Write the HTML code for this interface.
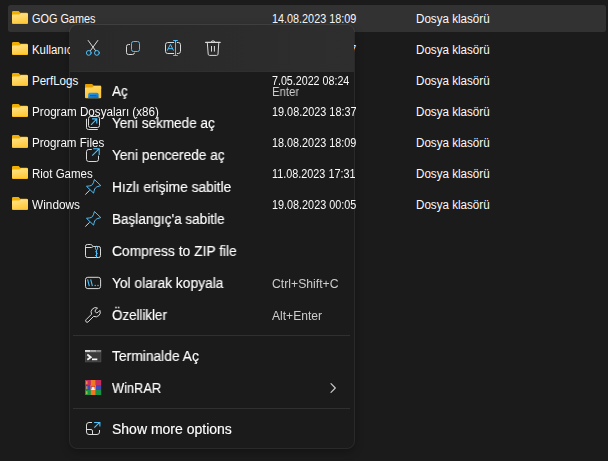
<!DOCTYPE html>
<html><head><meta charset="utf-8">
<style>
*{margin:0;padding:0;box-sizing:border-box}
html,body{width:608px;height:461px;overflow:hidden;background:#1b1b1b;font-family:"Liberation Sans",sans-serif;color:#fff}
.a{position:absolute}
.t{position:absolute;white-space:nowrap;transform-origin:0 0}
.ic{position:absolute;overflow:visible}
.hl{position:absolute;left:8px;top:5px;width:598px;height:27px;background:#323232;border-radius:2.5px}
.ln{font-size:12px;line-height:12px;color:#fafafa}
.mt{font-size:14px;line-height:14px;color:#fff;will-change:transform;-webkit-text-stroke:0.15px #fff}
.sc{font-size:12px;line-height:12px;color:#cdcdcd;will-change:transform}
.menu{position:absolute;left:69px;top:24px;width:286px;height:425px;background:transparent;border:1px solid rgba(255,255,255,0.065);background-clip:padding-box;border-radius:8px;overflow:hidden;box-shadow:0 3px 8px rgba(0,0,0,0.28)}
.tb{position:absolute;left:0;top:0;width:100%;height:47px;background:linear-gradient(90deg,#292929,#2b2b2b 50%,#2e2e2e);border-bottom:1px solid #2f2f2f}
.sep{position:absolute;left:73px;width:277px;height:1px;background:#303030}
</style></head><body>
<svg width="0" height="0" style="position:absolute"><defs>
<linearGradient id="fg" x1="0" y1="0" x2="0.3" y2="1"><stop offset="0" stop-color="#ffe590"/><stop offset="1" stop-color="#ffc93a"/></linearGradient>
<linearGradient id="fg2" x1="0" y1="0" x2="0.3" y2="1"><stop offset="0" stop-color="#ffdc70"/><stop offset="1" stop-color="#ffc22a"/></linearGradient>
<linearGradient id="bg2" x1="0" y1="0" x2="0.4" y2="1"><stop offset="0" stop-color="#2aa0f0"/><stop offset="1" stop-color="#0a74cc"/></linearGradient>
</defs></svg>
<div class="hl"></div>
<svg class="ic" width="16" height="13" viewBox="0 0 16 13" style="left:12px;top:11px">
<path d="M1.2 0h5.4l1.7 1.8h6.5a1.2 1.2 0 0 1 1.2 1.2V5H0V1.2A1.2 1.2 0 0 1 1.2 0z" fill="#f0ae00"/>
<path d="M0 4.6a1 1 0 0 1 1-1H7.4l1.6-1.3H14.8a1.2 1.2 0 0 1 1.2 1.2V11.8a1.2 1.2 0 0 1-1.2 1.2H1.2A1.2 1.2 0 0 1 0 11.8Z" fill="url(#fg)"/>
<rect x="0.3" y="12" width="15.4" height="1" rx="0.5" fill="#f2b000" opacity="0.55"/>
</svg>
<svg class="ic" width="16" height="13" viewBox="0 0 16 13" style="left:12px;top:42px">
<path d="M1.2 0h5.4l1.7 1.8h6.5a1.2 1.2 0 0 1 1.2 1.2V5H0V1.2A1.2 1.2 0 0 1 1.2 0z" fill="#f0ae00"/>
<path d="M0 4.6a1 1 0 0 1 1-1H7.4l1.6-1.3H14.8a1.2 1.2 0 0 1 1.2 1.2V11.8a1.2 1.2 0 0 1-1.2 1.2H1.2A1.2 1.2 0 0 1 0 11.8Z" fill="url(#fg)"/>
<rect x="0.3" y="12" width="15.4" height="1" rx="0.5" fill="#f2b000" opacity="0.55"/>
</svg>
<svg class="ic" width="16" height="13" viewBox="0 0 16 13" style="left:12px;top:73px">
<path d="M1.2 0h5.4l1.7 1.8h6.5a1.2 1.2 0 0 1 1.2 1.2V5H0V1.2A1.2 1.2 0 0 1 1.2 0z" fill="#f0ae00"/>
<path d="M0 4.6a1 1 0 0 1 1-1H7.4l1.6-1.3H14.8a1.2 1.2 0 0 1 1.2 1.2V11.8a1.2 1.2 0 0 1-1.2 1.2H1.2A1.2 1.2 0 0 1 0 11.8Z" fill="url(#fg)"/>
<rect x="0.3" y="12" width="15.4" height="1" rx="0.5" fill="#f2b000" opacity="0.55"/>
</svg>
<svg class="ic" width="16" height="13" viewBox="0 0 16 13" style="left:12px;top:104px">
<path d="M1.2 0h5.4l1.7 1.8h6.5a1.2 1.2 0 0 1 1.2 1.2V5H0V1.2A1.2 1.2 0 0 1 1.2 0z" fill="#f0ae00"/>
<path d="M0 4.6a1 1 0 0 1 1-1H7.4l1.6-1.3H14.8a1.2 1.2 0 0 1 1.2 1.2V11.8a1.2 1.2 0 0 1-1.2 1.2H1.2A1.2 1.2 0 0 1 0 11.8Z" fill="url(#fg)"/>
<rect x="0.3" y="12" width="15.4" height="1" rx="0.5" fill="#f2b000" opacity="0.55"/>
</svg>
<svg class="ic" width="16" height="13" viewBox="0 0 16 13" style="left:12px;top:135px">
<path d="M1.2 0h5.4l1.7 1.8h6.5a1.2 1.2 0 0 1 1.2 1.2V5H0V1.2A1.2 1.2 0 0 1 1.2 0z" fill="#f0ae00"/>
<path d="M0 4.6a1 1 0 0 1 1-1H7.4l1.6-1.3H14.8a1.2 1.2 0 0 1 1.2 1.2V11.8a1.2 1.2 0 0 1-1.2 1.2H1.2A1.2 1.2 0 0 1 0 11.8Z" fill="url(#fg)"/>
<rect x="0.3" y="12" width="15.4" height="1" rx="0.5" fill="#f2b000" opacity="0.55"/>
</svg>
<svg class="ic" width="16" height="13" viewBox="0 0 16 13" style="left:12px;top:166px">
<path d="M1.2 0h5.4l1.7 1.8h6.5a1.2 1.2 0 0 1 1.2 1.2V5H0V1.2A1.2 1.2 0 0 1 1.2 0z" fill="#f0ae00"/>
<path d="M0 4.6a1 1 0 0 1 1-1H7.4l1.6-1.3H14.8a1.2 1.2 0 0 1 1.2 1.2V11.8a1.2 1.2 0 0 1-1.2 1.2H1.2A1.2 1.2 0 0 1 0 11.8Z" fill="url(#fg)"/>
<rect x="0.3" y="12" width="15.4" height="1" rx="0.5" fill="#f2b000" opacity="0.55"/>
</svg>
<svg class="ic" width="16" height="13" viewBox="0 0 16 13" style="left:12px;top:197px">
<path d="M1.2 0h5.4l1.7 1.8h6.5a1.2 1.2 0 0 1 1.2 1.2V5H0V1.2A1.2 1.2 0 0 1 1.2 0z" fill="#f0ae00"/>
<path d="M0 4.6a1 1 0 0 1 1-1H7.4l1.6-1.3H14.8a1.2 1.2 0 0 1 1.2 1.2V11.8a1.2 1.2 0 0 1-1.2 1.2H1.2A1.2 1.2 0 0 1 0 11.8Z" fill="url(#fg)"/>
<rect x="0.3" y="12" width="15.4" height="1" rx="0.5" fill="#f2b000" opacity="0.55"/>
</svg>
<div class="t ln" style="left:32px;top:13px;transform:scaleX(0.906)">GOG Games</div>
<div class="t ln" style="left:272px;top:13px;transform:scaleX(0.902)">14.08.2023 18:09</div>
<div class="t ln" style="left:32px;top:44px;transform:scaleX(0.95)">Kullanıcılar</div>
<div class="t ln" style="left:272px;top:44px;transform:scaleX(0.902)">14.08.2023 18:07</div>
<div class="t ln" style="left:416px;top:13px;transform:scaleX(0.969)">Dosya klasörü</div>
<div class="t ln" style="left:416px;top:44px;transform:scaleX(0.969)">Dosya klasörü</div>
<div class="t ln" style="left:416px;top:75px;transform:scaleX(0.969)">Dosya klasörü</div>
<div class="t ln" style="left:416px;top:106px;transform:scaleX(0.969)">Dosya klasörü</div>
<div class="t ln" style="left:416px;top:137px;transform:scaleX(0.969)">Dosya klasörü</div>
<div class="t ln" style="left:416px;top:168px;transform:scaleX(0.969)">Dosya klasörü</div>
<div class="t ln" style="left:416px;top:199px;transform:scaleX(0.969)">Dosya klasörü</div>
<div class="menu"><div class="tb"></div></div>
<div class="sep" style="top:335px"></div><div class="sep" style="top:408px"></div>

<!-- toolbar icons -->
<svg class="ic" width="20" height="20" viewBox="0 0 20 20" style="left:83px;top:37px" fill="none" stroke-linecap="round">
 <path d="M5.2 3.5L12.5 13.6M14.8 3.5L7.5 13.6" stroke="#dadada" stroke-width="1"/>
 <circle cx="5.8" cy="15.9" r="2.4" stroke="#4cc2ff" stroke-width="1"/>
 <circle cx="13.9" cy="15.9" r="2.4" stroke="#4cc2ff" stroke-width="1"/>
</svg>
<svg class="ic" width="20" height="20" viewBox="0 0 20 20" style="left:122px;top:37px" fill="none">
 <path d="M8 7.5H6.5a2 2 0 0 0-2 2V15.5a2 2 0 0 0 2 2H10.5a2 2 0 0 0 2-1.8" stroke="#dadada" stroke-width="1"/>
 <rect x="9.5" y="4.5" width="8" height="10" rx="2" stroke="#4cc2ff" stroke-width="1"/>
</svg>
<svg class="ic" width="22" height="20" viewBox="0 0 22 20" style="left:162px;top:37px" fill="none">
 <path d="M12.1 5.5H5.7a2.2 2.2 0 0 0-2.2 2.2V14.3a2.2 2.2 0 0 0 2.2 2.2H12.1" stroke="#dadada" stroke-width="1"/>
 <path d="M14.9 5.5H16.3a2.2 2.2 0 0 1 2.2 2.2V14.3a2.2 2.2 0 0 1-2.2 2.2H14.9" stroke="#dadada" stroke-width="1"/>
 <path d="M11.2 3.5H15.8M13.5 3.5V18.5M11.2 18.5H15.8" stroke="#4cc2ff" stroke-width="1"/>
 <path d="M5.2 13.6L8.4 7.4L11.6 13.6M6.3 11.7H10.5" stroke="#4cc2ff" stroke-width="1" stroke-linejoin="round"/>
</svg>
<svg class="ic" width="20" height="20" viewBox="0 0 20 20" style="left:202px;top:37px" fill="none">
 <path d="M3.6 5.4H18.2" stroke="#dadada" stroke-width="1.1" stroke-linecap="round"/>
 <path d="M9.2 5.3a1.7 1.4 0 0 1 3.6 0" stroke="#dadada" stroke-width="1"/>
 <path d="M5.3 5.6L6.2 17.2a1.4 1.4 0 0 0 1.4 1.2H14.6a1.4 1.4 0 0 0 1.4-1.2L16.8 5.6" stroke="#dadada" stroke-width="1"/>
 <path d="M9.5 9V14.6M12.4 9V14.6" stroke="#dadada" stroke-width="1"/>
</svg>

<!-- menu icons -->
<svg class="ic" width="17" height="15" viewBox="0 0 17 15" style="left:85px;top:84px">
 <path d="M1 0h6.1l1.5 1.6H15.2a1 1 0 0 1 1 1V5H0V1a1 1 0 0 1 1-1z" fill="#e5a000"/>
 <path d="M0 4.4a1 1 0 0 1 1-1H7.3l1.6-1.4H15.2a1 1 0 0 1 1 1V13.2a1 1 0 0 1-1 1H1a1 1 0 0 1-1-1Z" fill="url(#fg2)"/>
 <path d="M3.2 14.2V10.3a1.5 1.5 0 0 1 1.5-1.5h7.4a1.5 1.5 0 0 1 1.5 1.5v3.9z" fill="url(#bg2)"/>
 <rect x="5" y="11" width="6.3" height="1.1" fill="#0b5ea8"/>
</svg>
<svg class="ic" width="20" height="20" viewBox="0 0 20 20" style="left:84px;top:114px" fill="none">
 <path d="M2.5 4.8V13.5a2 2 0 0 0 2 2H13.8" stroke="#dadada" stroke-width="1"/>
 <rect x="4.5" y="2.5" width="11" height="11" rx="2" stroke="#dadada" stroke-width="1"/>
 <path d="M7 10.9L12.6 5.1M8.1 4.9H12.8V9.6" stroke="#4cc2ff" stroke-width="1.1"/>
</svg>
<svg class="ic" width="20" height="20" viewBox="0 0 20 20" style="left:84px;top:146px" fill="none">
 <path d="M7.8 3.5H4.7a2.2 2.2 0 0 0-2.2 2.2V13.3a2.2 2.2 0 0 0 2.2 2.2H12.3a2.2 2.2 0 0 0 2.2-2.2V9.7" stroke="#dadada" stroke-width="1"/>
 <path d="M8.2 9.7L15 2.9M9.2 2.8H15.2V9" stroke="#4cc2ff" stroke-width="1.1"/>
</svg>
<svg class="ic" width="20" height="20" viewBox="0 0 20 20" style="left:84px;top:176px" fill="none">
 <path d="M2.6 13.5L5.6 16.4" stroke="none"/>
 <path d="M1.6 18.3L5.4 14.5" stroke="#dadada" stroke-width="1" stroke-linecap="round"/>
 <path d="M2.5 10.3C4.6 9.9 7 10.2 8.4 8.6C9.4 7.4 9.9 5.4 10.4 3.5L16.8 9.6C14.8 10.2 12.7 10.6 11.6 11.8C10.3 13.1 10.1 15.1 9.6 17.1Z" stroke="#4cc2ff" stroke-width="1" stroke-linejoin="round"/>
</svg><svg class="ic" width="20" height="20" viewBox="0 0 20 20" style="left:84px;top:208px" fill="none">
 <path d="M2.6 13.5L5.6 16.4" stroke="none"/>
 <path d="M1.6 18.3L5.4 14.5" stroke="#dadada" stroke-width="1" stroke-linecap="round"/>
 <path d="M2.5 10.3C4.6 9.9 7 10.2 8.4 8.6C9.4 7.4 9.9 5.4 10.4 3.5L16.8 9.6C14.8 10.2 12.7 10.6 11.6 11.8C10.3 13.1 10.1 15.1 9.6 17.1Z" stroke="#4cc2ff" stroke-width="1" stroke-linejoin="round"/>
</svg>
<svg class="ic" width="20" height="20" viewBox="0 0 20 20" style="left:84px;top:240px" fill="none">
 <path d="M1.5 6.3a1.8 1.8 0 0 1 1.8-1.8H6.6a1.8 1.8 0 0 1 1.4.7L9.3 6.5H14.7a1.8 1.8 0 0 1 1.8 1.8V15.7a1.8 1.8 0 0 1-1.8 1.8H3.3a1.8 1.8 0 0 1-1.8-1.8Z" stroke="#dadada" stroke-width="1"/>
 <path d="M1.5 7.5H7.6l1.6-1" stroke="#dadada" stroke-width="1"/>
 <path d="M12.5 10.1V17.9" stroke="#4cc2ff" stroke-width="1.1"/>
 <ellipse cx="12.5" cy="8.1" rx="1.15" ry="1.85" stroke="#4cc2ff" stroke-width="1"/>
 <path d="M11.3 11.7h1.2M12.5 13.6h1.2M11.3 15.5h1.2" stroke="#4cc2ff" stroke-width="1"/>
</svg>
<svg class="ic" width="20" height="20" viewBox="0 0 20 20" style="left:84px;top:272px" fill="none">
 <rect x="1.5" y="5.3" width="15.1" height="11.3" rx="2.3" stroke="#dadada" stroke-width="1"/>
 <path d="M3.6 7.4L5.3 14.2M6.7 7.4L8.4 14.2" stroke="#4cc2ff" stroke-width="1.1"/>
 <circle cx="11.2" cy="13.6" r="0.75" fill="#4cc2ff"/><circle cx="14" cy="13.6" r="0.75" fill="#4cc2ff"/>
</svg>
<svg class="ic" width="17" height="17" viewBox="0 0 17 17" style="left:85px;top:307px" fill="none">
 <path d="M6.56 7.21A4.6 4.6 0 0 1 12.52 0.98L10.56 2.94A1.7 1.7 0 0 0 12.96 5.34L14.92 3.38A4.6 4.6 0 0 1 8.69 9.34L3.16 14.86A1.5 1.5 0 0 1 1.04 12.74Z" stroke="#dadada" stroke-width="1" stroke-linejoin="round"/>
</svg>
<svg class="ic" width="17" height="13" viewBox="0 0 17 13" style="left:85px;top:350px">
 <rect x="0" y="0" width="16.2" height="12.2" fill="#3a3a3a"/>
 <rect x="0" y="0" width="5.2" height="2.4" fill="#dedede"/>
 <rect x="5.2" y="0" width="6.2" height="2.4" fill="#ababab"/>
 <rect x="11.4" y="0" width="4.8" height="2.4" fill="#858585"/>
 <rect x="0.5" y="2.4" width="15.2" height="9.3" fill="none" stroke="#484848" stroke-width="1"/>
 <path d="M2.3 4.6L5.7 7.2L2.3 9.8" fill="none" stroke="#f0f0f0" stroke-width="1.9" stroke-linejoin="miter"/>
 <rect x="7" y="8.5" width="5.3" height="1.7" fill="#f5f5f5"/>
</svg>
<svg class="ic" width="17" height="16" viewBox="0 0 17 16" style="left:85px;top:380px">
 <rect x="0" y="0" width="16.2" height="5" fill="#c42d5e"/>
 <rect x="0" y="5" width="16.2" height="5" fill="#4148b8"/>
 <rect x="0" y="10" width="16.2" height="5" fill="#179443"/>
 <rect x="5.8" y="0" width="4.6" height="15" fill="#ef7822"/>
 <rect x="5.8" y="5" width="4.6" height="5" fill="#f4f4f4"/>
 <path d="M5.8 5H10.4V9.6L9.6 9.2V7.4Q8.1 5.9 6.6 7.4V9.2L5.8 9.6Z" fill="#e0461a"/>
 <path d="M5.8 5H10.4V6.3Q8.1 5.4 5.8 6.3Z" fill="#ef7822"/>
 <rect x="1.4" y="1.2" width="0.9" height="3" fill="#ffd23c"/>
 <rect x="1.4" y="6.2" width="0.9" height="3" fill="#ffb63c"/>
 <rect x="1.4" y="11.2" width="0.9" height="3" fill="#ffd23c"/>
</svg>
<svg class="ic" width="20" height="20" viewBox="0 0 20 20" style="left:324px;top:378px" fill="none">
 <path d="M7 5.6L11.3 10L7 14.4" stroke="#c8c8c8" stroke-width="1.2" stroke-linecap="round" stroke-linejoin="round"/>
</svg>
<svg class="ic" width="20" height="20" viewBox="0 0 20 20" style="left:84px;top:418px" fill="none">
 <path d="M8 4.5H5a2.5 2.5 0 0 0-2.5 2.5V14a2.5 2.5 0 0 0 2.5 2.5H13a2.5 2.5 0 0 0 2.5-2.5V12" stroke="#dadada" stroke-width="1"/>
 <path d="M2.5 11.5H7a1.5 1.5 0 0 1 1.5 1.5V16.5" stroke="#dadada" stroke-width="1"/>
 <path d="M10.3 9.7L15.6 4.4M10.1 4.5H15.9V8.6" stroke="#4cc2ff" stroke-width="1.1"/>
</svg>
<div class="t mt" style="left:112px;top:84px;transform:scaleX(0.963)">Aç</div>
<div class="t mt" style="left:112px;top:116px;transform:scaleX(0.969)">Yeni sekmede aç</div>
<div class="t mt" style="left:112px;top:148px;transform:scaleX(0.975)">Yeni pencerede aç</div>
<div class="t mt" style="left:112px;top:180px;transform:scaleX(0.983)">Hızlı erişime sabitle</div>
<div class="t mt" style="left:112px;top:212px;transform:scaleX(0.968)">Başlangıç'a sabitle</div>
<div class="t mt" style="left:112px;top:244px;transform:scaleX(0.986)">Compress to ZIP file</div>
<div class="t mt" style="left:112px;top:276px;transform:scaleX(0.985)">Yol olarak kopyala</div>
<div class="t mt" style="left:112px;top:308px;transform:scaleX(0.953)">Özellikler</div>
<div class="t mt" style="left:112px;top:349px;transform:scaleX(0.988)">Terminalde Aç</div>
<div class="t mt" style="left:112px;top:381px;transform:scaleX(0.917)">WinRAR</div>
<div class="t mt" style="left:112px;top:422px;transform:scaleX(1.0)">Show more options</div>
<div class="t sc" style="left:272px;top:86px;transform:scaleX(0.946)">Enter</div>
<div class="t sc" style="left:272px;top:278px;transform:scaleX(1.018)">Ctrl+Shift+C</div>
<div class="t sc" style="left:272px;top:310px;transform:scaleX(1.008)">Alt+Enter</div>
<div class="t ln" style="left:32px;top:75px;transform:scaleX(0.962)">PerfLogs</div>
<div class="t ln" style="left:272px;top:75px;transform:scaleX(0.891)">7.05.2022 08:24</div>
<div class="t ln" style="left:32px;top:106px;transform:scaleX(0.971)">Program Dosyaları (x86)</div>
<div class="t ln" style="left:272px;top:106px;transform:scaleX(0.905)">19.08.2023 18:37</div>
<div class="t ln" style="left:32px;top:137px;transform:scaleX(0.968)">Program Files</div>
<div class="t ln" style="left:272px;top:137px;transform:scaleX(0.902)">18.08.2023 18:09</div>
<div class="t ln" style="left:32px;top:168px;transform:scaleX(0.958)">Riot Games</div>
<div class="t ln" style="left:272px;top:168px;transform:scaleX(0.902)">11.08.2023 17:31</div>
<div class="t ln" style="left:32px;top:199px;transform:scaleX(0.986)">Windows</div>
<div class="t ln" style="left:272px;top:199px;transform:scaleX(0.902)">19.08.2023 00:05</div>
</body></html>
